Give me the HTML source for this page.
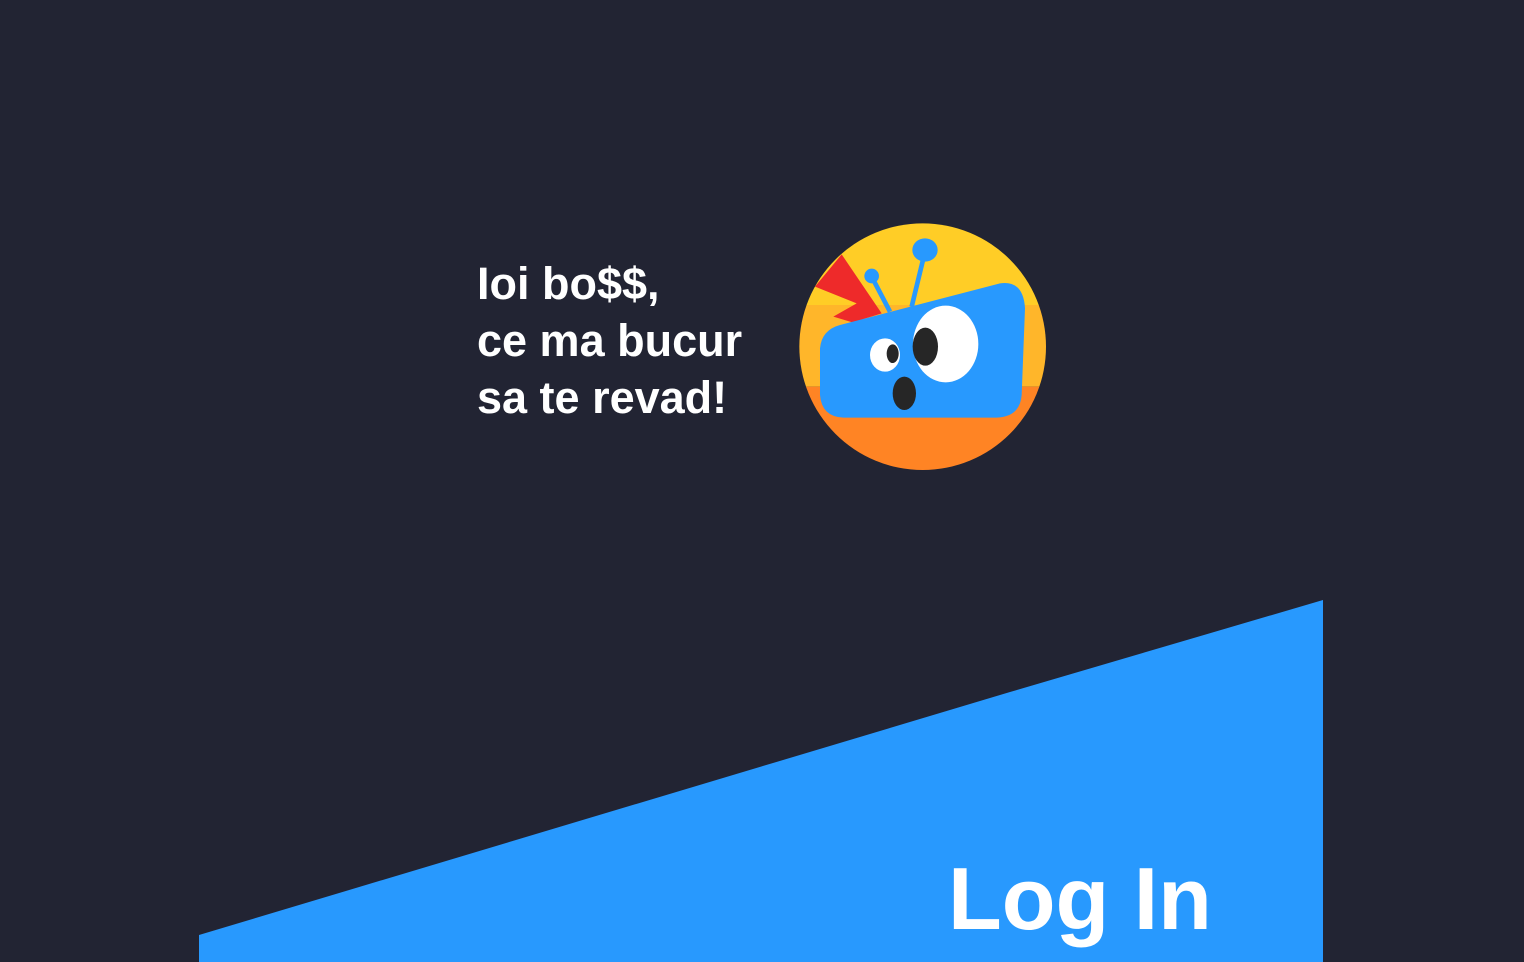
<!DOCTYPE html>
<html><head><meta charset="utf-8"><style>
html,body{margin:0;padding:0;width:1524px;height:962px;overflow:hidden;background:#222433;font-family:"Liberation Sans",sans-serif;}
.t{position:absolute;left:477px;top:255px;color:#fff;font-size:45px;font-weight:bold;line-height:57px;white-space:nowrap;}
.login{position:absolute;left:948px;top:847px;color:#fff;font-size:88px;font-weight:bold;line-height:104px;}
svg{position:absolute;}
</style></head><body>
<svg width="1524" height="962" style="left:0;top:0">
<polygon points="199,935 1010,692 1323,600 1323,962 199,962" fill="#2899fe"/>
</svg>
<div class="t">Ioi bo$$,<br>ce ma bucur<br>sa te revad!</div>
<svg style="left:790px;top:215px" width="265" height="265" viewBox="0 0 795 795">
<defs><clipPath id="c"><circle cx="398" cy="395" r="370"/></clipPath></defs>
<g clip-path="url(#c)">
<rect x="0" y="0" width="795" height="270" fill="#ffcd26"/>
<rect x="0" y="270" width="795" height="245" fill="#ffb62a"/>
<rect x="0" y="515" width="795" height="300" fill="#ff8424"/>
<polygon points="155,118 75,215 200,265 130,305 320,362 220,312 275,295" fill="#ee2a2a"/>
</g>
<line x1="300" y1="290" x2="245" y2="185" stroke="#2899fe" stroke-width="14"/>
<circle cx="245" cy="183" r="22" fill="#2899fe"/>
<line x1="365" y1="275" x2="405" y2="110" stroke="#2899fe" stroke-width="14"/>
<ellipse cx="405" cy="105" rx="38" ry="35" fill="#2899fe"/>
<path d="M150,330 L630,205 Q700,195 705,280 L695,540 Q690,605 620,608 L160,608 Q95,605 90,540 L90,400 Q95,345 150,330 Z" fill="#2899fe"/>
<ellipse cx="285" cy="420" rx="45" ry="50" fill="#fff"/>
<ellipse cx="308" cy="416" rx="18" ry="28" fill="#262626"/>
<ellipse cx="467" cy="387" rx="98" ry="115" fill="#fff"/>
<ellipse cx="406" cy="395" rx="38" ry="57" fill="#262626"/>
<ellipse cx="343" cy="535" rx="35" ry="50" fill="#262626"/>
</svg>
<div class="login">Log In</div>
</body></html>
